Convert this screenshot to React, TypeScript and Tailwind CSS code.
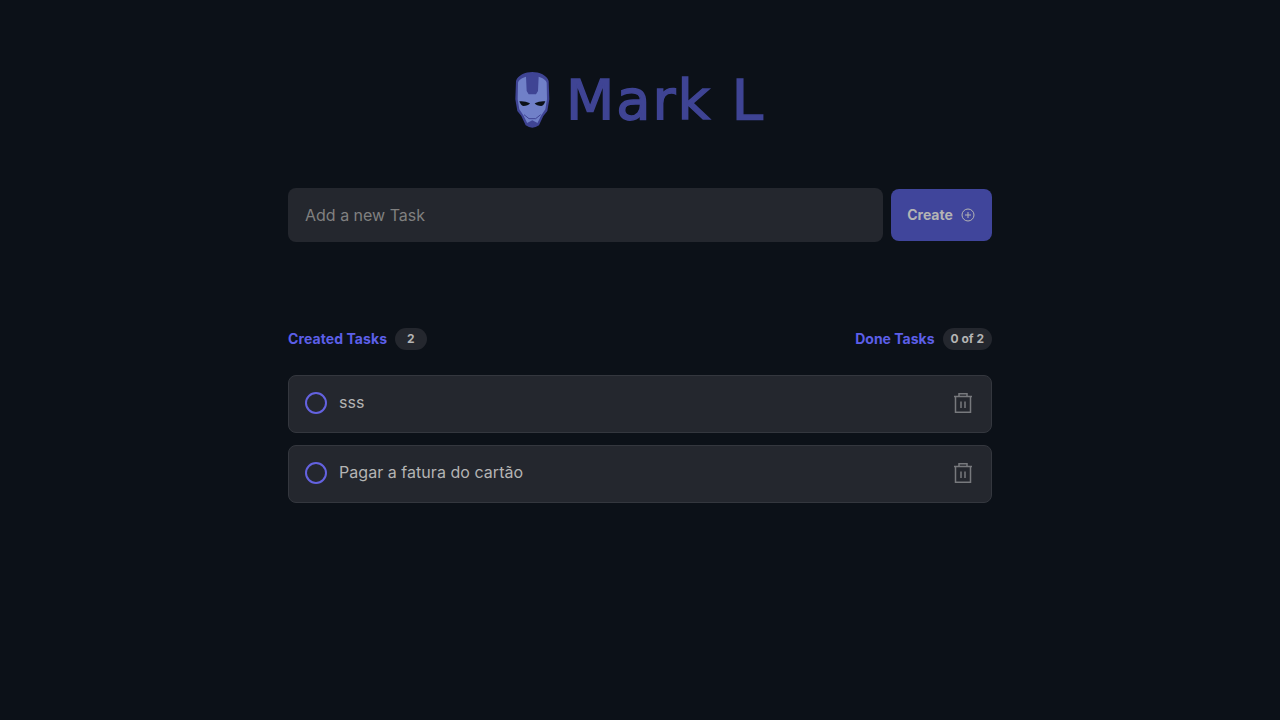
/* helmet logo */
function Helmet() {
  return (
    <svg width="35" height="58" viewBox="33 15 105 174" className="shrink-0">
      <path d="M36 45C40 28 65 18 85 18s45 10 49 27l2 55-6 35-12 15-13 28q-20 14-40 0L52 150 40 135l-6-35z" fill="#3f4494" />
      <path d="M42 50c3-10 13-15 24-18l2 43 6 10h22l6-10 2-43c11 3 21 8 24 18l1 50-5 30-12 18-12 24H70l-12-24-12-18-5-30z" fill="#7080c8" />
      <path d="M46 106q16-2 32 6-6 8-20 8-8-2-12-14z" fill="#0c1118" />
      <path d="M124 106q-16-2-32 6 6 8 20 8 8-2 12-14z" fill="#0c1118" />
      <path d="M60 146l15 12h20l15-12" fill="none" stroke="#3f4494" strokeWidth="3" />
      <path d="M68 172l17-9 17 9-4 8H72z" fill="#3f4494" />
    </svg>
  );
}

function TrashIcon() {
  return (
    <svg width="22" height="22" viewBox="0 0 22 22" fill="none" stroke="#77797d" strokeWidth="1.5" className="shrink-0">
      <path d="M2 4.5h18M3.5 4.5V20.2h15V4.5M7 4.5V1.8h8v2.7M9 9.5v6.5M13 9.5v6.5" />
    </svg>
  );
}

function Task({ title }: { title: string }) {
  return (
    <div className="flex h-[58px] items-center rounded-lg border border-[#34373e] bg-[#24272e] pb-0.5 pl-4 pr-[17px]">
      <span className="h-[22px] w-[22px] shrink-0 rounded-full border-2 border-[#6462e0]" />
      <p className="ml-3 flex-1 pb-0.5 text-base tracking-[0.04px] text-[#b4b4b4]">{title}</p>
      <TrashIcon />
    </div>
  );
}

export default function App() {
  return (
    <div className="min-h-[720px] bg-[#0c1118] font-['Inter',sans-serif]">
      <header className="flex h-[188px] items-start justify-center pt-[71px]">
        <div className="flex items-center gap-4">
          <Helmet />
          <span className="font-['DejaVu_Sans',sans-serif] text-[56px] leading-[58px] tracking-[2px] text-[#3f4494] [-webkit-text-stroke:1.5px_#3f4494]">
            Mark L
          </span>
        </div>
      </header>

      <main className="mx-auto w-[704px]">
        <form className="flex items-center gap-2">
          <input
            placeholder="Add a new Task"
            className="h-[54px] flex-1 rounded-lg bg-[#24272e] px-[17px] text-base text-[#b4b4b4] outline-none placeholder:text-[#808080]"
          />
          <button
            type="button"
            className="flex h-[52px] w-[101px] items-center justify-center gap-2 rounded-lg bg-[#40459b] pr-px text-sm font-bold text-[#b4b4b4]"
          >
            Create
            <svg width="14" height="14" viewBox="0 0 14 14" fill="none" stroke="currentColor" strokeWidth="1">
              <circle cx="7" cy="7" r="6" />
              <path d="M7 4v6M4 7h6" />
            </svg>
          </button>
        </form>

        <div className="mt-[86px] flex h-[21px] items-center justify-between">
          <div className="flex items-center gap-2">
            <strong className="text-sm font-bold tracking-[0.08px] text-[#5c5fe8]">Created Tasks</strong>
            <span className="rounded-full bg-[#24272e] px-3 py-[3px] text-xs font-bold text-[#b4b4b4]">2</span>
          </div>
          <div className="flex items-center gap-2">
            <strong className="text-sm font-bold text-[#5c5fe8]">Done Tasks</strong>
            <span className="rounded-full bg-[#24272e] px-2 py-[3px] text-xs font-bold text-[#b4b4b4]">0 of 2</span>
          </div>
        </div>

        <div className="mt-[26px] flex flex-col gap-3">
          <Task title="sss" />
          <Task title="Pagar a fatura do cartão" />
        </div>
      </main>
    </div>
  );
}
